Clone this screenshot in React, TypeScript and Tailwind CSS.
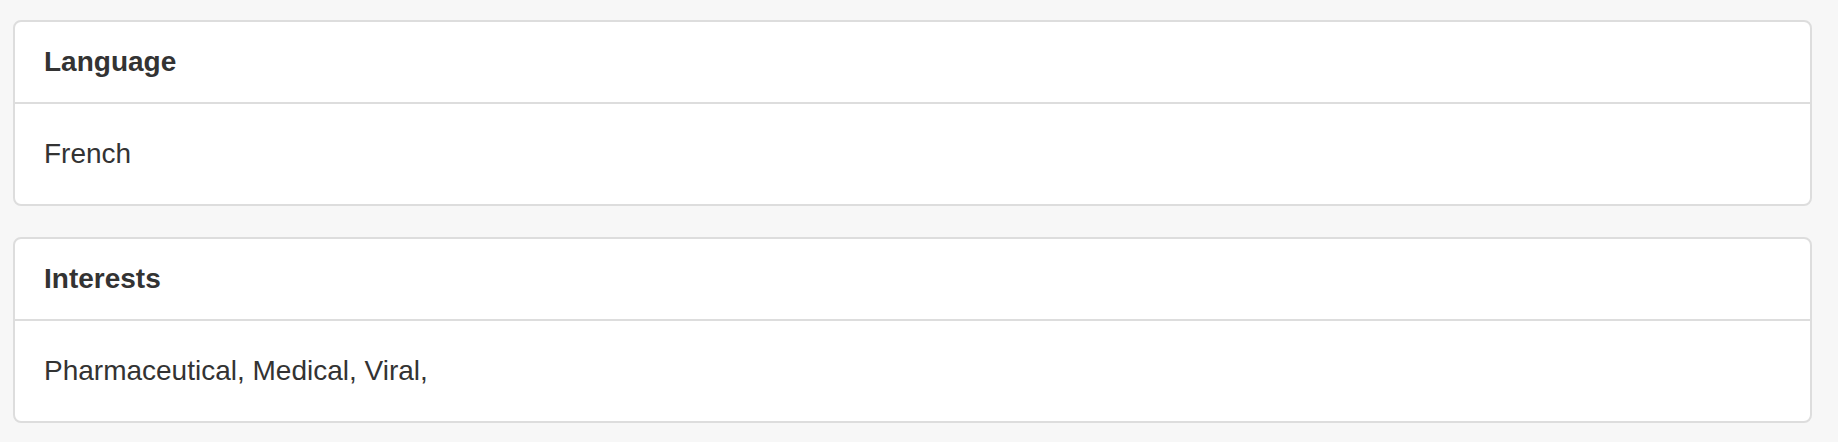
import React from "react";

function Panel({ title, body }: { title: string; body: string }) {
  return (
    <div className="bg-white border-2 border-[#dddddd] rounded-[8px]">
      <div className="border-b-2 border-[#dddddd] px-[29px] py-[20px]">
        <h3 className="text-[28px] leading-[40px] font-bold text-[#333333] m-0">{title}</h3>
      </div>
      <div className="px-[29px] py-[30px] text-[28px] leading-[40px] text-[#333333]">{body}</div>
    </div>
  );
}

export default function App() {
  return (
    <div
      className="min-h-screen w-full bg-[#f7f7f7] pt-[20px] pl-[13px] pr-[26px]"
      style={{ fontFamily: '"Liberation Sans", Arial, sans-serif' }}
    >
      <div className="flex flex-col gap-[31px]">
        <Panel title="Language" body="French" />
        <Panel title="Interests" body="Pharmaceutical, Medical, Viral," />
      </div>
    </div>
  );
}
